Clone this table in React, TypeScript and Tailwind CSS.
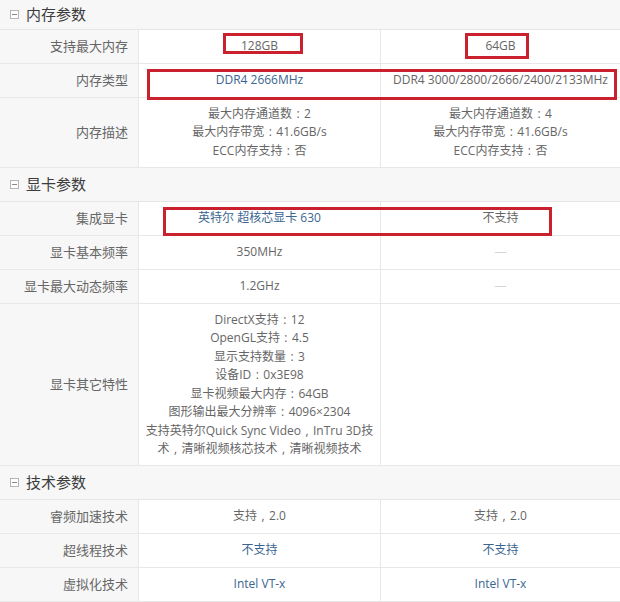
import React from "react";

type Cell = { lines: string[]; blue?: boolean; dash?: boolean };
type Row = { label: string; h: string; a: Cell; b: Cell };
type Section = { title: string; hh: string; rows: Row[] };

const g = (s: string | string[]): Cell => ({ lines: Array.isArray(s) ? s : [s] });
const bl = (s: string): Cell => ({ lines: [s], blue: true });
const dash: Cell = { lines: ["—"], dash: true };
const empty: Cell = { lines: [] };

const sections: Section[] = [
  {
    title: "内存参数",
    hh: "h-[30px]",
    rows: [
      { label: "支持最大内存", h: "h-[34px]", a: g("128GB"), b: g("64GB") },
      { label: "内存类型", h: "h-[34px]", a: bl("DDR4 2666MHz"), b: g("DDR4 3000/2800/2666/2400/2133MHz") },
      {
        label: "内存描述",
        h: "h-[70px]",
        a: g(["最大内存通道数：2", "最大内存带宽：41.6GB/s", "ECC内存支持：否"]),
        b: g(["最大内存通道数：4", "最大内存带宽：41.6GB/s", "ECC内存支持：否"]),
      },
    ],
  },
  {
    title: "显卡参数",
    hh: "h-[34px]",
    rows: [
      { label: "集成显卡", h: "h-[34px]", a: bl("英特尔 超核芯显卡 630"), b: g("不支持") },
      { label: "显卡基本频率", h: "h-[34px]", a: g("350MHz"), b: dash },
      { label: "显卡最大动态频率", h: "h-[34px]", a: g("1.2GHz"), b: dash },
      {
        label: "显卡其它特性",
        h: "h-[162px]",
        a: g([
          "DirectX支持：12",
          "OpenGL支持：4.5",
          "显示支持数量：3",
          "设备ID：0x3E98",
          "显卡视频最大内存：64GB",
          "图形输出最大分辨率：4096×2304",
          "支持英特尔Quick Sync Video，InTru 3D技",
          "术，清晰视频核芯技术，清晰视频技术",
        ]),
        b: empty,
      },
    ],
  },
  {
    title: "技术参数",
    hh: "h-[34px]",
    rows: [
      { label: "睿频加速技术", h: "h-[34px]", a: g("支持，2.0"), b: g("支持，2.0") },
      { label: "超线程技术", h: "h-[34px]", a: bl("不支持"), b: bl("不支持") },
      { label: "虚拟化技术", h: "h-[34px]", a: bl("Intel VT-x"), b: bl("Intel VT-x") },
    ],
  },
];

function Line({ text }: { text: string }) {
  const parts = text.split(/([：，])/);
  return (
    <div>
      {parts.map((p, i) =>
        p === "：" ? (
          <span key={i} className="inline-block w-[12px] text-center">:</span>
        ) : p === "，" ? (
          <span key={i} className="inline-block w-[12px] text-center">,</span>
        ) : (
          <span key={i}>{p}</span>
        )
      )}
    </div>
  );
}

function ValueCell({ c, last }: { c: Cell; last?: boolean }) {
  return (
    <div
      className={
        "flex flex-col items-center justify-center text-center text-[12px] leading-[18.5px] whitespace-nowrap " +
        (last ? "" : "border-r border-[#e8e8e8] ") +
        (c.dash ? "text-[#d4d4d4]" : c.blue ? "text-[#3a6590]" : "text-[#666]")
      }
    >
      {c.lines.map((l, i) => (
        <Line key={i} text={l} />
      ))}
    </div>
  );
}

export default function App() {
  return (
    <div
      className="relative w-[620px] h-[602px] overflow-hidden bg-white"
      style={{ fontFamily: '"Open Sans", "Noto Sans CJK SC", sans-serif' }}
    >
      {sections.map((s) => (
        <div key={s.title}>
          <div className={"flex items-center bg-[#f7f7f7] border-b border-[#e6e6e6] " + s.hh}>
            <div className="ml-[10px] w-[9px] h-[9px] border border-[#b5b5b5] bg-white flex items-center justify-center">
              <div className="w-[5px] h-[1px] bg-[#888]" />
            </div>
            <div className="ml-[7px] text-[15px] text-[#3c3c3c] leading-none">{s.title}</div>
          </div>
          {s.rows.map((r) => (
            <div
              key={r.label}
              className={"grid grid-cols-[139px_242px_1fr] border-b border-[#e8e8e8] " + r.h}
            >
              <div className="flex items-center justify-end pr-[10px] bg-[#f7f7f7] border-r border-[#e8e8e8] text-[13px] text-[#666]">
                {r.label}
              </div>
              <ValueCell c={r.a} />
              <ValueCell c={r.b} last />
            </div>
          ))}
        </div>
      ))}

      {/* red highlight boxes */}
      <div className="absolute left-[223px] top-[33px] w-[80px] h-[21px] border-[3px] border-[#c9212e]" />
      <div className="absolute left-[465px] top-[33px] w-[64px] h-[26px] border-[3px] border-[#c9212e]" />
      <div className="absolute left-[147px] top-[69px] w-[470px] h-[31px] border-[3px] border-[#c9212e]" />
      <div className="absolute left-[163px] top-[207px] w-[389px] h-[29px] border-[3px] border-[#c9212e]" />
    </div>
  );
}
